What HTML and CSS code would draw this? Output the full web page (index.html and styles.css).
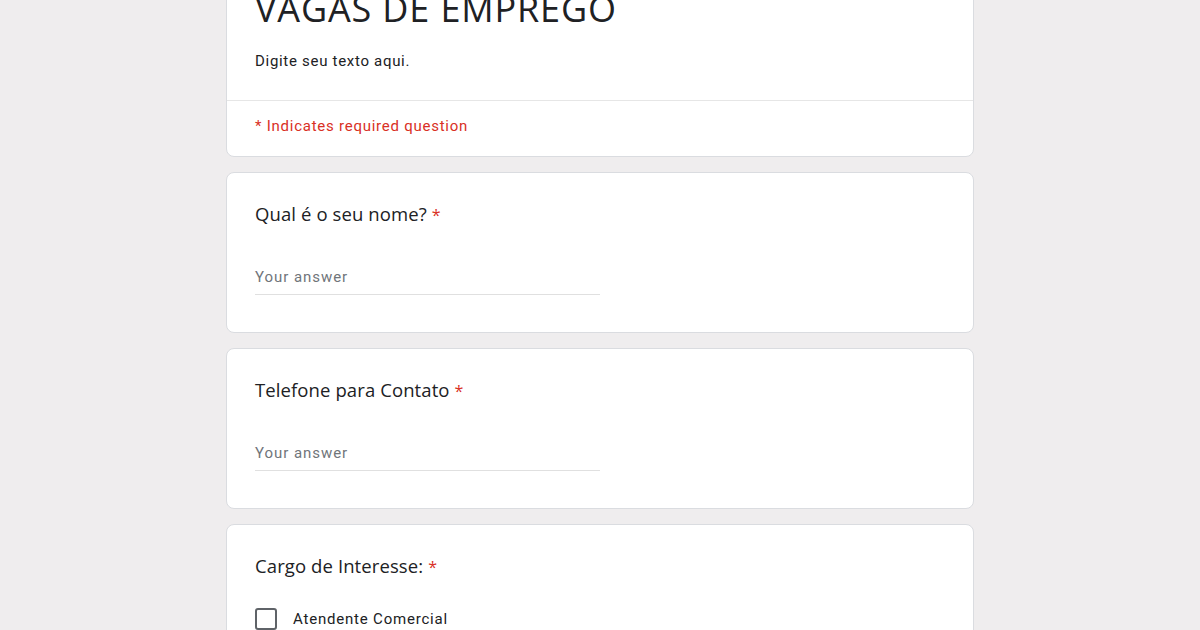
FILE: index.html
```html
<!DOCTYPE html>
<html>
<head>
<meta charset="utf-8">
<link rel="stylesheet" href="styles.css">
</head>
<body>
<div class="form">
  <div class="card header">
    <div class="header-top">
      <h1 class="title">VAGAS DE EMPREGO</h1>
      <p class="desc">Digite seu texto aqui.</p>
    </div>
    <div class="header-bottom">
      <span class="req-note">* Indicates required question</span>
    </div>
  </div>

  <div class="card question">
    <div class="q-title">Qual é o seu nome? <span class="star">*</span></div>
    <div class="answer">Your answer</div>
  </div>

  <div class="card question">
    <div class="q-title">Telefone para Contato <span class="star">*</span></div>
    <div class="answer">Your answer</div>
  </div>

  <div class="card question">
    <div class="q-title">Cargo de Interesse: <span class="star">*</span></div>
    <div class="options">
      <label class="option"><span class="box"></span><span class="opt-label">Atendente Comercial</span></label>
      <label class="option"><span class="box"></span><span class="opt-label">Vendedor</span></label>
    </div>
  </div>
</div>
</body>
</html>
```

FILE: styles.css
```css
html, body {
  margin: 0;
  padding: 0;
  background: #efedee;
  overflow: hidden;
}
body {
  font-family: Roboto, "Liberation Sans", sans-serif;
  color: #202124;
}
.form {
  width: 748px;
  margin: -38px auto 0;
  display: flex;
  flex-direction: column;
  gap: 15px;
}
.card {
  background: #fff;
  border: 1px solid #dadce0;
  border-radius: 8px;
  box-sizing: border-box;
}
.header-top {
  padding: 22px 28px 29px;
  border-bottom: 1px solid #e6e6e6;
}
.title {
  margin: 0;
  font-family: "Open Sans", Roboto, sans-serif;
  font-weight: 400;
  font-size: 36px;
  line-height: 48px;
  letter-spacing: 0.85px;
  color: #202124;
}
.desc {
  margin: 18px 0 0;
  font-size: 15px;
  letter-spacing: 0.7px;
  line-height: 20px;
}
.header-bottom {
  padding: 15px 28px 20px;
}
.req-note {
  color: #d93025;
  font-size: 15px;
  letter-spacing: 0.75px;
  line-height: 20px;
}
.question {
  padding: 27px 28px 32px;
  min-height: 161px;
}
.q-title {
  font-family: "Open Sans", Roboto, sans-serif;
  font-size: 18.5px;
  letter-spacing: 0.1px;
  line-height: 28px;
  color: #202124;
}
.star {
  color: #d93025;
  font-size: 16px;
}
.answer {
  margin-top: 31px;
  width: 345px;
  font-size: 15px;
  letter-spacing: 0.95px;
  color: #70757a;
  padding: 6px 0 6px;
  border-bottom: 1px solid #e0e0e0;
  line-height: 22px;
}
.options {
  margin-top: 27px;
  display: flex;
  flex-direction: column;
  gap: 20px;
}
.option {
  display: flex;
  align-items: center;
  gap: 16px;
}
.box {
  width: 18px;
  height: 18px;
  border: 2px solid #5f6368;
  border-radius: 3px;
  box-sizing: content-box;
}
.opt-label {
  font-size: 15px;
  letter-spacing: 0.8px;
}
```
